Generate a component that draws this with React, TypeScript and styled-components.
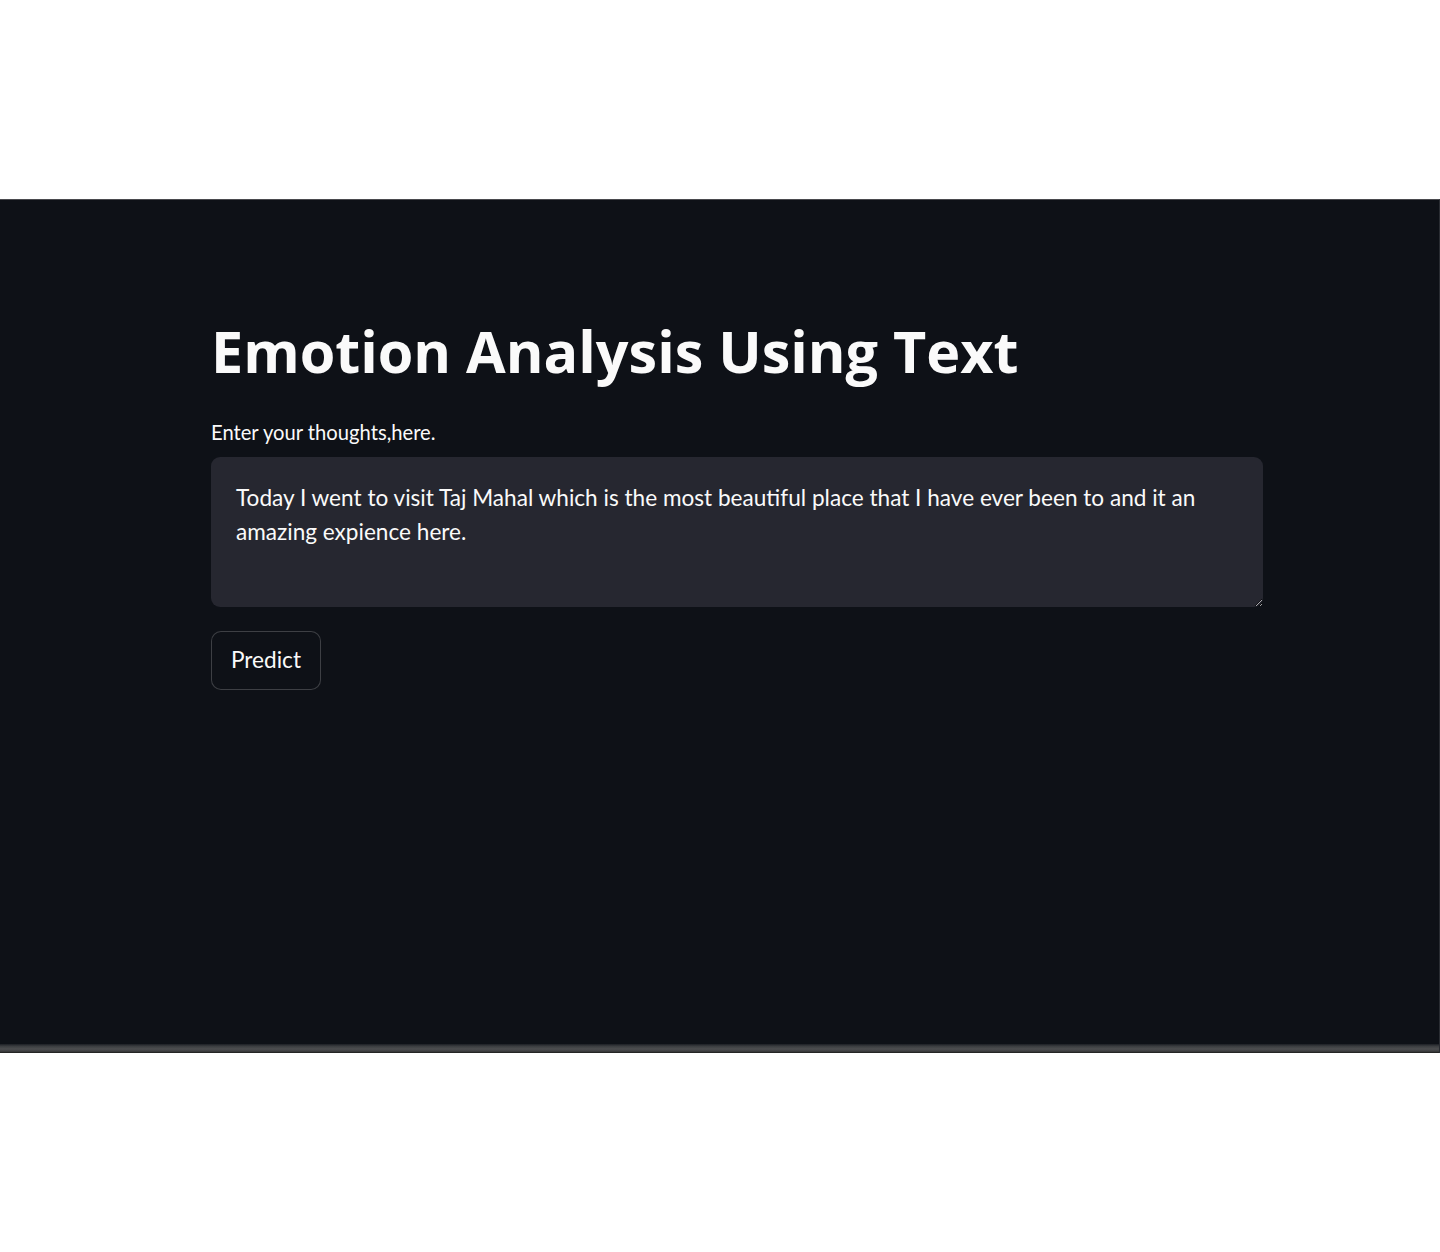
import React from "react";
import styled, { createGlobalStyle } from "styled-components";

const GlobalStyle = createGlobalStyle`
  html, body {
    margin: 0;
    padding: 0;
    background: #ffffff;
  }
  * { box-sizing: border-box; }
`;

const Page = styled.div`
  width: 1440px;
  height: 1252px;
  background: #ffffff;
  padding-top: 199px;
`;

const Frame = styled.div`
  width: 1440px;
  height: 854px;
  background: #0e1117;
  border-top: 1px solid #4a4a4e;
  border-right: 1px solid #2a2d33;
  display: flex;
  flex-direction: column;
`;

const Main = styled.main`
  flex: 1;
  padding: 117px 0 0 211px;
  width: 1263px;
  color: #fafafa;
`;

const Title = styled.h1`
  margin: 0 0 36px;
  font-family: "Open Sans", "Lato", sans-serif;
  font-weight: 700;
  font-size: 57.5px;
  line-height: 69px;
  color: #fafafa;
`;

const Label = styled.label`
  display: block;
  margin-bottom: 15px;
  font-family: "Lato", sans-serif;
  font-size: 20.2px;
  line-height: 20px;
  color: #fafafa;
`;

const TextArea = styled.textarea`
  display: block;
  width: 1052px;
  height: 150px;
  margin: 0 0 24px;
  padding: 24px 24px 20px 25px;
  border: none;
  border-radius: 9px;
  background: #262730;
  color: #fafafa;
  color-scheme: dark;
  font-family: "Lato", sans-serif;
  font-size: 22.6px;
  line-height: 34px;
  resize: vertical;
  outline: none;
  overflow: hidden;
`;

const Button = styled.button`
  display: inline-flex;
  align-items: center;
  justify-content: center;
  height: 59px;
  padding: 0 19px 2px;
  border: 1px solid rgba(250, 250, 250, 0.2);
  border-radius: 10px;
  background: #0e1117;
  color: #fafafa;
  font-family: "Lato", sans-serif;
  font-size: 22.6px;
  line-height: 34px;
  cursor: pointer;
`;

const ScrollBand = styled.div`
  height: 9px;
  background: linear-gradient(
    to bottom,
    #1c1f24 0%,
    #3b3d40 25%,
    #4d4e50 55%,
    #3e3f41 80%,
    #1a1a1a 100%
  );
`;

export default function App() {
  return (
    <Page>
      <GlobalStyle />
      <Frame>
        <Main>
          <Title>Emotion Analysis Using Text</Title>
          <Label htmlFor="thoughts">Enter your thoughts,here.</Label>
          <TextArea
            id="thoughts"
            defaultValue="Today I went to visit Taj Mahal which is the most beautiful place that I have ever been to and it an amazing expience here."
          />
          <Button type="button">Predict</Button>
        </Main>
        <ScrollBand />
      </Frame>
    </Page>
  );
}
